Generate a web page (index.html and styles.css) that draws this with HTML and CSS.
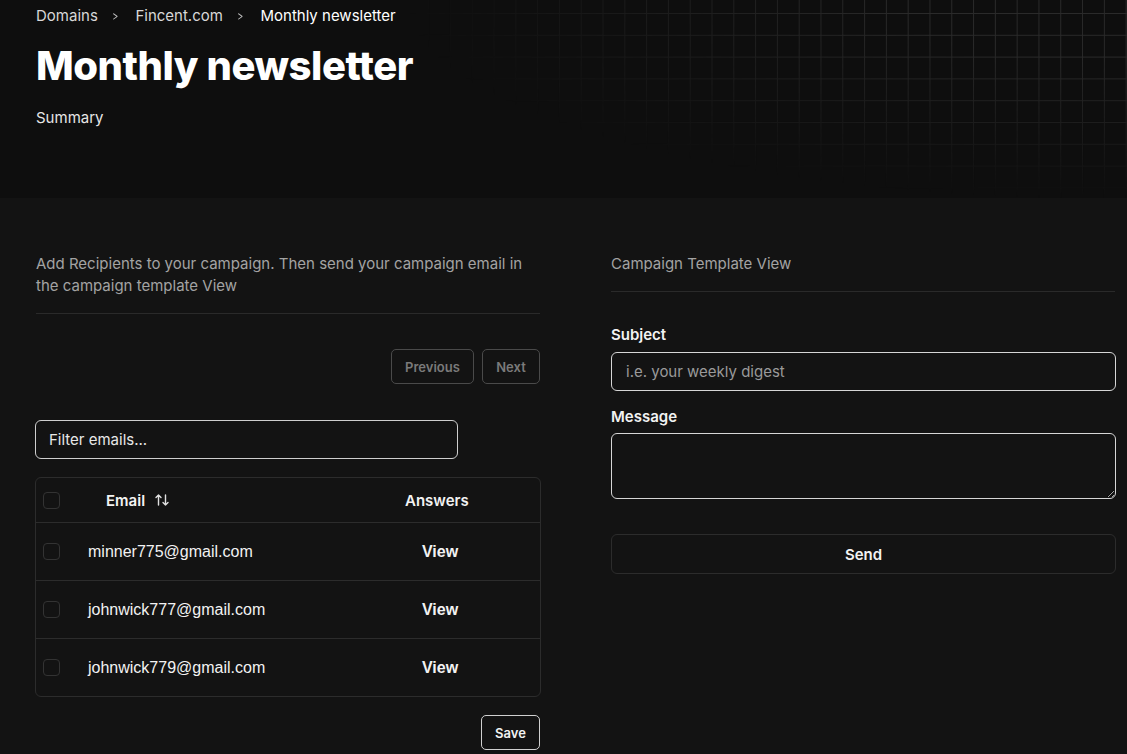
FILE: index.html
```html
<!DOCTYPE html>
<html lang="en">
<head>
<meta charset="utf-8">
<title>Monthly newsletter</title>
<link rel="stylesheet" href="styles.css">
</head>
<body>
<header class="hero">
  <div class="grid-bg"></div>
  <div class="hero-inner">
    <nav class="crumbs">
      <span class="crumb">Domains</span>
      <span class="sep">&gt;</span>
      <span class="crumb">Fincent.com</span>
      <span class="sep">&gt;</span>
      <span class="crumb current">Monthly newsletter</span>
    </nav>
    <h1 class="title">Monthly newsletter</h1>
    <p class="summary">Summary</p>
  </div>
</header>
<main class="content">
  <section class="col left">
    <p class="desc">Add Recipients to your campaign. Then send your campaign email in the campaign template View</p>
    <hr class="divider">
    <div class="pager">
      <button class="btn ghost">Previous</button>
      <button class="btn ghost">Next</button>
    </div>
    <input class="filter" type="text" placeholder="Filter emails...">
    <div class="table">
      <div class="row head">
        <span class="check"></span>
        <span class="email-h">Email <svg class="sort" width="16" height="16" viewBox="0 0 16 16" fill="none" stroke="currentColor" stroke-width="1.4" stroke-linecap="round" stroke-linejoin="round"><path d="M4.5 13V3M2 5.5l2.5-2.5 2.5 2.5"/><path d="M11.5 3v10M9 10.5l2.5 2.5 2.5-2.5"/></svg></span>
        <span class="ans-h">Answers</span>
      </div>
      <div class="row">
        <span class="check"></span>
        <span class="email">minner775@gmail.com</span>
        <span class="view">View</span>
      </div>
      <div class="row">
        <span class="check"></span>
        <span class="email">johnwick777@gmail.com</span>
        <span class="view">View</span>
      </div>
      <div class="row last">
        <span class="check"></span>
        <span class="email">johnwick779@gmail.com</span>
        <span class="view">View</span>
      </div>
    </div>
    <div class="save-row">
      <button class="btn light">Save</button>
    </div>
  </section>
  <section class="col right">
    <p class="desc single">Campaign Template View</p>
    <hr class="divider">
    <label class="label first">Subject</label>
    <input class="field" type="text" placeholder="i.e. your weekly digest">
    <label class="label second">Message</label>
    <textarea class="area"></textarea>
    <button class="send">Send</button>
  </section>
</main>
</body>
</html>
```
FILE: styles.css
```css
* { box-sizing: border-box; }
html, body { margin: 0; padding: 0; }
body {
  background: #131313;
  color: #f2f2f2;
  font-family: Inter, "Liberation Sans", sans-serif;
  width: 1127px;
  height: 754px;
  overflow: hidden;
}
.hero {
  position: relative;
  height: 198px;
  background: #0e0e0e;
  overflow: hidden;
}
.grid-bg {
  position: absolute;
  inset: 0;
  background-image:
    linear-gradient(to right, #2a2a2a 1px, transparent 1px),
    linear-gradient(to bottom, #2a2a2a 1px, transparent 1px);
  background-size: 21.8px 21.8px;
  background-position: 14px 13px;
  -webkit-mask-image: radial-gradient(ellipse 720px 200px at 100% 0%, #000 30%, transparent 100%);
  mask-image: radial-gradient(ellipse 720px 200px at 100% 0%, #000 30%, transparent 100%);
}
.hero-inner {
  position: relative;
  padding: 6px 36px 0;
}
.crumbs {
  display: flex;
  align-items: center;
  font-size: 15px;
  line-height: 20px;
  color: #d8d8d8;
}
.crumb.current { color: #ffffff; }
.sep {
  display: inline-block;
  margin: 0 16px 0 13px;
  color: #bdbdbd;
  font-size: 13px;
  transform: scaleX(0.7);
}
.title {
  margin: 16px 0 0;
  font-size: 40px;
  line-height: 48px;
  font-weight: 800;
  letter-spacing: -0.45px;
  color: #ffffff;
}
.summary {
  margin: 18px 0 0;
  font-size: 15px;
  line-height: 20px;
  color: #e6e6e6;
}
.content {
  display: flex;
  gap: 71px;
  padding: 55px 12px 0 36px;
}
.col { width: 504px; display: flex; flex-direction: column; }
.desc {
  margin: 0;
  font-size: 15px;
  line-height: 22px;
  color: #a3a3a3;
}
.divider {
  border: 0;
  border-top: 1px solid #2a2a2a;
  margin: 16px 0 0;
  width: 100%;
}
.pager {
  display: flex;
  justify-content: flex-end;
  gap: 8px;
  margin-top: 35px;
}
.btn {
  font-family: Inter, "Liberation Sans", sans-serif;
  font-size: 13px;
  font-weight: 600;
  height: 35px;
  border-radius: 5px;
  background: transparent;
  padding: 0 12px;
}
.btn.ghost {
  color: #7a7a7a;
  border: 1px solid #4a4a4a;
}
.btn.ghost:first-child { width: 83px; }
.btn.ghost:last-child { width: 58px; }
.btn.light {
  color: #f2f2f2;
  border: 1px solid #d0d0d0;
  width: 59px;
  padding: 0;
}
.filter {
  margin-top: 36px;
  width: 423px;
  height: 39px;
  border: 1px solid #cfcfcf;
  border-radius: 6px;
  background: transparent;
  padding: 0 13px;
  font-family: Inter, "Liberation Sans", sans-serif;
  font-size: 15px;
  color: #f2f2f2;
  margin-left: -1px;
}
.filter::placeholder { color: #e8e8e8; }
.table {
  margin-top: 18px;
  margin-left: -1px;
  width: 506px;
  border: 1px solid #2c2c2c;
  border-radius: 6px;
}
.row {
  display: flex;
  align-items: center;
  height: 58px;
  border-bottom: 1px solid #2c2c2c;
  padding-left: 7px;
}
.row.last { border-bottom: 0; height: 57px; }
.row.head { height: 45px; }
.check {
  width: 17px;
  height: 17px;
  border: 1px solid #333;
  border-radius: 4px;
  flex: none;
}
.email-h {
  display: flex;
  align-items: center;
  gap: 9px;
  margin-left: 46px;
  font-size: 15px;
  font-weight: 600;
  color: #f2f2f2;
  width: 280px;
}
.sort { color: #e0e0e0; }
.ans-h {
  font-size: 15px;
  font-weight: 600;
  color: #f2f2f2;
  margin-left: 19px;
}
.email {
  margin-left: 28px;
  font-family: "Liberation Sans", Arial, sans-serif;
  font-size: 16px;
  color: #f2f2f2;
  width: 312px;
}
.view {
  font-family: "Liberation Sans", Arial, sans-serif;
  font-weight: 700;
  font-size: 16px;
  color: #f2f2f2;
  width: 80px;
  text-align: center;
}
.save-row {
  display: flex;
  justify-content: flex-end;
  margin-top: 18px;
}
.label {
  font-size: 15px;
  font-weight: 600;
  color: #f2f2f2;
  line-height: 20px;
}
.label.first { margin-top: 33px; }
.label.second { margin-top: 16px; }
.field {
  margin-top: 7px;
  height: 39px;
  width: 505px;
  border: 1px solid #d6d6d6;
  border-radius: 6px;
  background: transparent;
  padding: 0 14px;
  font-family: Inter, "Liberation Sans", sans-serif;
  font-size: 15px;
  color: #f2f2f2;
}
.field::placeholder { color: #9a9a9a; }
.area {
  margin-top: 6px;
  height: 66px;
  width: 505px;
  border: 1px solid #d6d6d6;
  border-radius: 6px;
  background: transparent;
  resize: vertical;
  color: #f2f2f2;
}
.send {
  margin-top: 35px;
  height: 40px;
  width: 505px;
  border: 1px solid #2c2c2c;
  border-radius: 6px;
  background: transparent;
  color: #f2f2f2;
  font-family: Inter, "Liberation Sans", sans-serif;
  font-size: 15px;
  font-weight: 600;
}
```
